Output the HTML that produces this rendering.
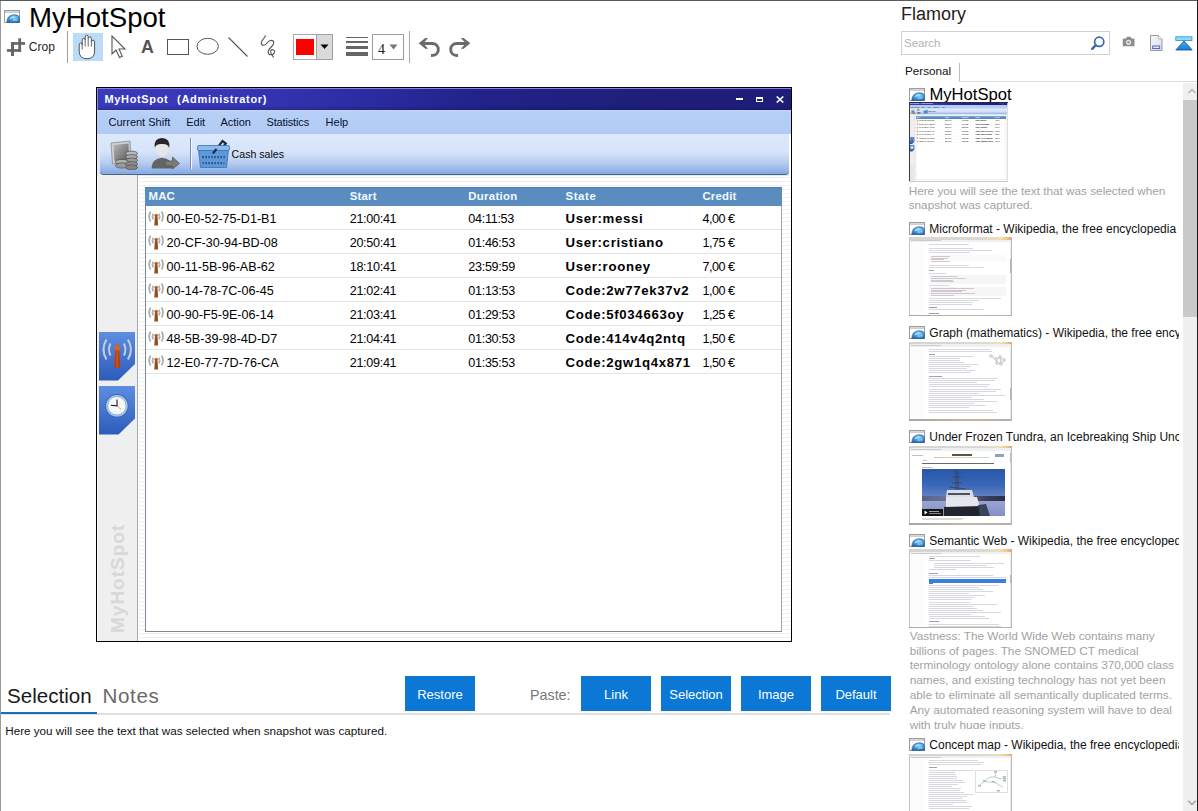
<!DOCTYPE html>
<html><head><meta charset="utf-8">
<style>
*{box-sizing:border-box}
html,body{margin:0;padding:0}
body{width:1198px;height:811px;overflow:hidden;position:relative;background:#fff;font-family:"Liberation Sans",sans-serif;color:#000}
.a{position:absolute}
.t{position:absolute;white-space:nowrap;line-height:1}
.btn{position:absolute;top:676px;width:70px;height:34.6px;background:#0a78d4;color:#fff;font-size:13px;line-height:34px;padding-top:2px;text-align:center}
</style></head><body>
<!-- window borders -->
<div class="a" style="left:0;top:0;width:1198px;height:1px;background:#5a5a5a"></div>
<div class="a" style="left:0;top:1px;width:1px;height:810px;background:#9a9a9a"></div>
<div class="a" style="left:1197px;top:0;width:1px;height:811px;background:#1a1a1a"></div>

<!-- app icon -->
<svg class="a" style="left:4px;top:10px" width="16" height="13"><use href="#ic"/></svg>
<div class="t" style="left:29px;top:4.4px;font-size:27.6px;color:#000">MyHotSpot</div>

<!-- toolbar -->
<svg class="a" style="left:6px;top:38px" width="20" height="19" viewBox="0 0 20 19">
<g fill="#666">
<rect x="5" y="4" width="3" height="14"/>
<rect x="12.3" y="0.3" width="2.8" height="13.5"/>
<rect x="5" y="4.1" width="14" height="2.7"/>
<rect x="0.9" y="11.1" width="14.2" height="2.7"/>
</g></svg>
<div class="t" style="left:28.8px;top:41.4px;font-size:12px;color:#222">Crop</div>
<div class="a" style="left:67px;top:31px;width:1px;height:32px;background:#a0a0a0"></div>
<div class="a" style="left:73px;top:32.5px;width:29.5px;height:28.5px;background:#bbdcf8"></div>
<svg class="a" style="left:78px;top:34px" width="18" height="26" viewBox="0 0 18 26">
<path d="M1.2 17 L1.2 11 Q1.2 9 2.7 9 Q4.2 9 4.2 11 L4.2 6 Q4.2 4.3 5.7 4.3 Q7.2 4.3 7.2 6 L7.2 3 Q7.2 1.2 8.7 1.2 Q10.2 1.2 10.2 3 L10.2 4.5 Q10.2 2.9 11.8 2.9 Q13.4 2.9 13.4 4.5 L13.4 8 Q13.4 6.2 15 6.2 Q16.6 6.2 16.6 8 L16.6 17 Q16.6 24.8 9 24.8 Q1.2 24.8 1.2 17 Z" fill="#fff" stroke="#555" stroke-width="1"/>
<path d="M4.2 11 L4.2 15.5 M7.2 6 L7.2 12.5 M10.2 4.5 L10.2 12.5 M13.4 8 L13.4 12.5" stroke="#555" stroke-width="0.9" fill="none"/>
</svg>
<svg class="a" style="left:111px;top:35px" width="16" height="24" viewBox="0 0 16 24">
<path d="M1 1 L1 19 L5 15 L8.5 22.5 L11.3 21.3 L8 14 L14 14 Z" fill="#fff" stroke="#555" stroke-width="1.1" stroke-linejoin="miter"/>
</svg>
<div class="t" style="left:141px;top:39.3px;font-size:17.8px;font-weight:700;color:#555">A</div>
<div class="a" style="left:167px;top:39px;width:22px;height:16px;border:1px solid #555"></div>
<svg class="a" style="left:196px;top:37px" width="24" height="19" viewBox="0 0 24 19">
<ellipse cx="11.7" cy="9.3" rx="10.7" ry="8" fill="none" stroke="#555" stroke-width="1"/>
</svg>
<svg class="a" style="left:227px;top:36px" width="22" height="22" viewBox="0 0 22 22">
<path d="M1.5 1.5 L20.5 20.5" stroke="#555" stroke-width="1.1"/>
</svg>
<svg class="a" style="left:252px;top:32px" width="30" height="30" viewBox="0 0 30 30"><path d="M13.5 3.3 C12.5 6.5 8.5 9 9.3 11.8 C10.2 14.2 13.2 13.6 15.2 11 C17.2 8.6 19.6 7.6 21.2 9 C22.6 10.4 21.4 12.8 19.2 15 C16.4 17.8 15 20 16.8 22 C18.6 23.6 22.5 22.4 22.6 19.6 C22.6 17.4 19.8 17 18.8 18.6 C18 20.2 19.4 22.6 21.6 25.4" fill="none" stroke="#555" stroke-width="1.1"/></svg>
<!-- color picker -->
<div class="a" style="left:293px;top:34px;width:40px;height:25.5px;border:1px solid #a8a8a8;background:#fff"></div>
<div class="a" style="left:296px;top:38.7px;width:18px;height:16.3px;background:#f00"></div>
<div class="a" style="left:316px;top:34px;width:17px;height:25.5px;border:1px solid #a0a0a0;background:#dadada"></div>
<svg class="a" style="left:320px;top:44px" width="9" height="6" viewBox="0 0 9 6"><path d="M0.5 0.5 L8.5 0.5 L4.5 5 Z" fill="#000"/></svg>
<!-- line width -->
<div class="a" style="left:346px;top:37px;width:22px;height:1px;background:#666"></div>
<div class="a" style="left:346px;top:41px;width:22px;height:2px;background:#666"></div>
<div class="a" style="left:346px;top:46px;width:22px;height:3px;background:#666"></div>
<div class="a" style="left:346px;top:52px;width:22px;height:4px;background:#666"></div>
<div class="a" style="left:372px;top:34px;width:31.5px;height:25.5px;border:1px solid #9a9a9a;background:#fff"></div>
<div class="t" style="left:378px;top:42.6px;font-size:14px;font-family:'Liberation Serif',serif;color:#222">4</div>
<svg class="a" style="left:389px;top:44px" width="9" height="6" viewBox="0 0 9 6"><path d="M0.5 0.5 L8.5 0.5 L4.5 5.5 Z" fill="#777"/></svg>
<div class="a" style="left:409px;top:31px;width:1px;height:32px;background:#a8a8a8"></div>
<!-- undo redo -->
<svg class="a" style="left:410px;top:30px" width="70" height="32" viewBox="0 0 70 32">
<g fill="#6b6b6b"><path d="M8.7 13.3 L15.3 8.1 L18.1 8.1 L14.3 12.3 L14.3 14.5 L18.1 18.7 L15.3 18.7 Z"/><path d="M60.3 13.3 L53.7 8.1 L50.9 8.1 L54.7 12.3 L54.7 14.5 L50.9 18.7 L53.7 18.7 Z"/></g>
<g fill="none" stroke="#6b6b6b" stroke-width="2.9"><path d="M12.5 13.45 L22 13.45 C26.5 13.45 28.3 16.5 28.3 19.45 C28.3 22.5 26.5 25.45 22 25.45 L21 25.45"/><path d="M56.5 13.45 L47 13.45 C42.5 13.45 40.7 16.5 40.7 19.45 C40.7 22.5 42.5 25.45 47 25.45 L48 25.45"/></g>
</svg>

<!-- EMBEDDED WINDOW -->
<div id="win" class="a" style="left:96px;top:87px;width:696px;height:555px;background:#fff;border:1px solid #000;overflow:hidden">
<!-- rel coords: page - (97,88) -->
<div class="a" style="left:0;top:0;width:694px;height:22px;background:linear-gradient(180deg,rgba(0,0,0,0) 0,rgba(0,0,0,0) 80%,rgba(10,10,60,0.25) 100%),linear-gradient(90deg,#3a3abc 0,#3636b6 20%,#2c2ca2 38%,#22228a 55%,#1f1f7c 75%,#1e1e78 100%)"></div><div class="a" style="left:0;top:0;width:694px;height:1px;background:#8484dc"></div><div class="a" style="left:0;top:0;width:1px;height:22px;background:#8a8ae0"></div>
<div class="t" style="left:7.5px;top:5.6px;font-size:11px;font-weight:700;color:#fff;letter-spacing:0.65px">MyHotSpot</div>
<div class="t" style="left:80px;top:5.6px;font-size:11px;font-weight:700;color:#fff;letter-spacing:0.72px">(Administrator)</div>
<div class="a" style="left:639px;top:10px;width:7px;height:2.2px;background:#fff"></div>
<div class="a" style="left:658.9px;top:8.5px;width:7px;height:5.6px;border:1px solid #fff;border-top-width:2px"></div>
<svg class="a" style="left:678.5px;top:7.7px" width="8" height="7" viewBox="0 0 8 7"><path d="M0.7 0.5 L7.3 6.5 M7.3 0.5 L0.7 6.5" stroke="#fff" stroke-width="1.6"/></svg>
<!-- menu bar -->
<div class="a" style="left:0;top:22px;width:694px;height:24px;background:linear-gradient(180deg,#c4d8fa 0,#b6cff6 2px,#b2cbf4 100%)"></div>
<div class="t" style="left:11.5px;top:29px;font-size:11px;color:#0a1030">Current Shift</div>
<div class="t" style="left:89.2px;top:29px;font-size:11px;color:#0a1030">Edit</div>
<div class="t" style="left:123.4px;top:29px;font-size:11px;color:#0a1030">Action</div>
<div class="t" style="left:169.5px;top:29px;font-size:11px;color:#0a1030;letter-spacing:-0.15px">Statistics</div>
<div class="t" style="left:228.6px;top:29px;font-size:11px;color:#0a1030">Help</div>
<!-- toolbar -->
<div class="a" style="left:0;top:46px;width:694px;height:42px;background:#dfe8f6"></div>
<div class="a" style="left:692px;top:46px;width:2px;height:42px;background:#fff"></div>
<div class="a" style="left:2.5px;top:46px;width:689px;height:40.5px;border-radius:4px;background:linear-gradient(180deg,#dce9fc 0,#d6e3f9 45%,#b6cdf0 72%,#84aae2 100%);border-bottom:1.5px solid #4a6088"></div>
<!-- icons -->
<svg class="a" style="left:13px;top:52px" width="30" height="30" viewBox="0 0 30 30">
<defs><linearGradient id="scr" x1="0" y1="0" x2="1" y2="1"><stop offset="0" stop-color="#b8b8b8"/><stop offset="1" stop-color="#5a5a5a"/></linearGradient></defs>
<path d="M1 3 L20 1 L21 22 L2.5 24 Z" fill="#d0d0d0" stroke="#8a8a8a" stroke-width="0.8"/>
<path d="M3.5 5 L18.5 3.5 L19 19.5 L4.5 21 Z" fill="url(#scr)"/>
<g stroke="#4a4a4a" stroke-width="0.7">
<ellipse cx="21.5" cy="13.5" rx="6" ry="2.4" fill="#b8b8b8"/>
<ellipse cx="21.5" cy="17" rx="6" ry="2.4" fill="#a8a8a8"/>
<ellipse cx="21.5" cy="20.5" rx="6" ry="2.4" fill="#9a9a9a"/>
<ellipse cx="12" cy="22" rx="6.5" ry="2.6" fill="#b0b0b0"/>
<ellipse cx="12" cy="25.5" rx="6.5" ry="2.6" fill="#9a9a9a"/>
<ellipse cx="21.5" cy="24" rx="6" ry="2.4" fill="#8e8e8e"/>
<ellipse cx="21.5" cy="27.3" rx="6" ry="2.4" fill="#858585"/>
</g></svg>
<svg class="a" style="left:54px;top:49px" width="30" height="33" viewBox="0 0 30 33">
<ellipse cx="11" cy="12.5" rx="6.3" ry="7.2" fill="#e6e6e6"/>
<path d="M3.8 11 Q2.5 1 11 1 Q19.5 1 18.2 11 Q17 6.5 11 7 Q5 6.5 3.8 11 Z" fill="#262626"/>
<path d="M0.5 31.5 Q1 21.5 11 20.8 Q21 21.5 21.5 31.5 Z" fill="#646464"/>
<path d="M14 24 L21.5 24 L21.5 20 L28.5 26.5 L21.5 32 L21.5 29 L14 29 Z" fill="#7a7a7a" stroke="#505050" stroke-width="0.7"/>
</svg>
<div class="a" style="left:92.7px;top:50px;width:1px;height:31px;background:#7a8ab0"></div>
<div class="a" style="left:93.7px;top:50px;width:1px;height:31px;background:#f4f8ff"></div>
<svg class="a" style="left:100px;top:50px" width="34" height="31" viewBox="0 0 34 31">
<path d="M16 15.5 L25.5 3 L28.8 5.5 L19.5 18" fill="none" stroke="#1c2c48" stroke-width="2.2"/>
<path d="M1.5 12 L31.5 12 L29.5 29.5 L3.5 29.5 Z" fill="#5e98d6" stroke="#3a70b0" stroke-width="0.8"/>
<rect x="0.5" y="7.5" width="32" height="5" rx="1.5" fill="#8cbcec" stroke="#3a70b0" stroke-width="0.8"/>
<path d="M16 15.5 L19.5 10.8" stroke="#1c2c48" stroke-width="2.2"/>
<g fill="#2a5a98"><rect x="5" y="18" width="23" height="2.2"/><rect x="5.5" y="24" width="22" height="2.2"/></g>
<g fill="#5e98d6"><rect x="7" y="17" width="1.3" height="10"/><rect x="10" y="17" width="1.3" height="10"/><rect x="13" y="17" width="1.3" height="10"/><rect x="16" y="17" width="1.3" height="10"/><rect x="19" y="17" width="1.3" height="10"/><rect x="22" y="17" width="1.3" height="10"/><rect x="25" y="17" width="1.3" height="10"/></g>
</svg>
<div class="t" style="left:134.6px;top:60.9px;font-size:10.6px;color:#0a0a0a">Cash sales</div>
<!-- content area -->
<div class="a" style="left:0;top:88px;width:694px;height:467px;background:repeating-linear-gradient(180deg,#fff 0,#fff 1px,#efefec 1px,#efefec 2px,#fff 2px,#fff 4px)"></div>
<div class="a" style="left:1px;top:87px;width:39px;height:468px;background:#efefef"></div>
<div class="a" style="left:40px;top:87px;width:1px;height:468px;background:#a4a8b0"></div>
<!-- sidebar buttons -->
<svg class="a" style="left:2px;top:243px" width="37" height="50" viewBox="0 0 37 50">
<defs><linearGradient id="sb" x1="0" y1="0" x2="0" y2="1"><stop offset="0" stop-color="#5e8ede"/><stop offset="1" stop-color="#2c5cbc"/></linearGradient></defs>
<path d="M0 1 L36 1 L36 33 L19 49.5 L0 49.5 Z" fill="url(#sb)"/>
<g fill="none" stroke="#cfd6e6" stroke-width="2" opacity="0.9">
<path d="M7.5 8.5 Q1.5 18.5 7.5 28.5"/><path d="M11.5 12.5 Q8.5 18.5 11.5 24.5"/><path d="M28.9 8.5 Q34.9 18.5 28.9 28.5"/><path d="M24.9 12.5 Q27.9 18.5 24.9 24.5"/></g>
<path d="M16.4 17 L20 17 L21.4 36.4 L15 36.4 Z" fill="#b8400e"/>
<path d="M17.4 17 L18.4 17 L18.8 36 L17.6 36 Z" fill="#e06a2a" opacity="0.7"/>
<circle cx="18.2" cy="16.8" r="2.8" fill="#e0601a"/>
</svg>
<svg class="a" style="left:2px;top:298px" width="37" height="50" viewBox="0 0 37 50">
<path d="M0 0 L36 0 L36 32.6 L19.5 48.6 L0 48.6 Z" fill="url(#sb)"/>
<circle cx="17.9" cy="19.8" r="11.7" fill="#3a66b8"/>
<circle cx="17.9" cy="19.8" r="10.8" fill="#a8ccec"/>
<circle cx="17.9" cy="19.8" r="9.2" fill="#f8f8f8" stroke="#7aa8d8" stroke-width="0.8"/>
<path d="M18 13.4 L18 19.8 L11.8 19.2" fill="none" stroke="#1a1a1a" stroke-width="1.1"/>
<path d="M18 19.8 L22 23.5" stroke="#d04040" stroke-width="0.5"/>
</svg>
<div class="t" style="left:11px;top:545px;font-size:19px;font-weight:700;color:#d8d8d8;letter-spacing:1px;transform-origin:0 0;transform:rotate(-90deg)">MyHotSpot</div>
<!-- table -->
<div class="a" style="left:48px;top:99px;width:637px;height:445px;background:#fff;border-left:1px solid #7a8898;border-right:1px solid #9aa4b0;border-bottom:1.5px solid #7a8898"></div>
<div class="a" style="left:48px;top:99px;width:637px;height:18.7px;background:#5b8cc0;border-top:1px solid #4e7cb0"></div>
<div class="t" style="left:51.5px;top:103.3px;font-size:11.4px;font-weight:700;color:#eefaff;letter-spacing:0.2px">MAC</div>
<div class="t" style="left:252.7px;top:103.3px;font-size:11.4px;font-weight:700;color:#eefaff;letter-spacing:0.2px">Start</div>
<div class="t" style="left:371.3px;top:103.3px;font-size:11.4px;font-weight:700;color:#eefaff;letter-spacing:0.3px">Duration</div>
<div class="t" style="left:468.5px;top:103.3px;font-size:11.4px;font-weight:700;color:#eefaff;letter-spacing:0.6px">State</div>
<div class="t" style="left:605.4px;top:103.3px;font-size:11.4px;font-weight:700;color:#eefaff;letter-spacing:0.2px">Credit</div>
<svg class="a" style="left:51px;top:122.0px" width="16" height="17" viewBox="0 0 16 17"><g fill="none" stroke="#b0b0b0" stroke-width="1.8"><path d="M2.6 1.5 Q-0.2 6.5 2.6 11.5"/><path d="M5.3 3.6 Q3.9 6.5 5.3 9.4"/><path d="M13.6 1.5 Q16.4 6.5 13.6 11.5"/><path d="M10.9 3.6 Q12.3 6.5 10.9 9.4"/></g><path d="M7 5 L9.4 5 L10.1 15.6 L6.3 15.6 Z" fill="#9a4a1e"/><circle cx="8.2" cy="5.3" r="1.6" fill="#c05a28"/></svg><div class="t" style="left:69.6px;top:124.9px;font-size:12.6px;letter-spacing:0px">00-E0-52-75-D1-B1</div><div class="t" style="left:252.7px;top:124.9px;font-size:12.6px;letter-spacing:-0.3px">21:00:41</div><div class="t" style="left:371.3px;top:124.9px;font-size:12.6px;letter-spacing:-0.3px">04:11:53</div><div class="t" style="left:468.5px;top:123.9px;font-size:13.2px;font-weight:700;letter-spacing:0.68px">User:messi</div><div class="t" style="left:605.4px;top:124.9px;font-size:12.6px;letter-spacing:-0.5px">4,00 €</div><div class="a" style="left:49px;top:140.7px;width:635px;height:1.3px;background:#e2e4e8"></div><svg class="a" style="left:51px;top:146.0px" width="16" height="17" viewBox="0 0 16 17"><g fill="none" stroke="#b0b0b0" stroke-width="1.8"><path d="M2.6 1.5 Q-0.2 6.5 2.6 11.5"/><path d="M5.3 3.6 Q3.9 6.5 5.3 9.4"/><path d="M13.6 1.5 Q16.4 6.5 13.6 11.5"/><path d="M10.9 3.6 Q12.3 6.5 10.9 9.4"/></g><path d="M7 5 L9.4 5 L10.1 15.6 L6.3 15.6 Z" fill="#9a4a1e"/><circle cx="8.2" cy="5.3" r="1.6" fill="#c05a28"/></svg><div class="t" style="left:69.6px;top:148.9px;font-size:12.6px;letter-spacing:0px">20-CF-30-94-BD-08</div><div class="t" style="left:252.7px;top:148.9px;font-size:12.6px;letter-spacing:-0.3px">20:50:41</div><div class="t" style="left:371.3px;top:148.9px;font-size:12.6px;letter-spacing:-0.3px">01:46:53</div><div class="t" style="left:468.5px;top:147.9px;font-size:13.2px;font-weight:700;letter-spacing:0.68px">User:cristiano</div><div class="t" style="left:605.4px;top:148.9px;font-size:12.6px;letter-spacing:-0.5px">1,75 €</div><div class="a" style="left:49px;top:164.7px;width:635px;height:1.3px;background:#e2e4e8"></div><svg class="a" style="left:51px;top:170.0px" width="16" height="17" viewBox="0 0 16 17"><g fill="none" stroke="#b0b0b0" stroke-width="1.8"><path d="M2.6 1.5 Q-0.2 6.5 2.6 11.5"/><path d="M5.3 3.6 Q3.9 6.5 5.3 9.4"/><path d="M13.6 1.5 Q16.4 6.5 13.6 11.5"/><path d="M10.9 3.6 Q12.3 6.5 10.9 9.4"/></g><path d="M7 5 L9.4 5 L10.1 15.6 L6.3 15.6 Z" fill="#9a4a1e"/><circle cx="8.2" cy="5.3" r="1.6" fill="#c05a28"/></svg><div class="t" style="left:69.6px;top:172.9px;font-size:12.6px;letter-spacing:0px">00-11-5B-96-AB-62</div><div class="t" style="left:252.7px;top:172.9px;font-size:12.6px;letter-spacing:-0.3px">18:10:41</div><div class="t" style="left:371.3px;top:172.9px;font-size:12.6px;letter-spacing:-0.3px">23:59:59</div><div class="t" style="left:468.5px;top:171.9px;font-size:13.2px;font-weight:700;letter-spacing:0.68px">User:rooney</div><div class="t" style="left:605.4px;top:172.9px;font-size:12.6px;letter-spacing:-0.5px">7,00 €</div><div class="a" style="left:49px;top:188.7px;width:635px;height:1.3px;background:#e2e4e8"></div><svg class="a" style="left:51px;top:194.0px" width="16" height="17" viewBox="0 0 16 17"><g fill="none" stroke="#b0b0b0" stroke-width="1.8"><path d="M2.6 1.5 Q-0.2 6.5 2.6 11.5"/><path d="M5.3 3.6 Q3.9 6.5 5.3 9.4"/><path d="M13.6 1.5 Q16.4 6.5 13.6 11.5"/><path d="M10.9 3.6 Q12.3 6.5 10.9 9.4"/></g><path d="M7 5 L9.4 5 L10.1 15.6 L6.3 15.6 Z" fill="#9a4a1e"/><circle cx="8.2" cy="5.3" r="1.6" fill="#c05a28"/></svg><div class="t" style="left:69.6px;top:196.9px;font-size:12.6px;letter-spacing:0px">00-14-78-7C-06-45</div><div class="t" style="left:252.7px;top:196.9px;font-size:12.6px;letter-spacing:-0.3px">21:02:41</div><div class="t" style="left:371.3px;top:196.9px;font-size:12.6px;letter-spacing:-0.3px">01:13:53</div><div class="t" style="left:468.5px;top:195.9px;font-size:13.2px;font-weight:700;letter-spacing:0.68px">Code:2w77ek37v2</div><div class="t" style="left:605.4px;top:196.9px;font-size:12.6px;letter-spacing:-0.5px">1,00 €</div><div class="a" style="left:49px;top:212.7px;width:635px;height:1.3px;background:#e2e4e8"></div><svg class="a" style="left:51px;top:218.0px" width="16" height="17" viewBox="0 0 16 17"><g fill="none" stroke="#b0b0b0" stroke-width="1.8"><path d="M2.6 1.5 Q-0.2 6.5 2.6 11.5"/><path d="M5.3 3.6 Q3.9 6.5 5.3 9.4"/><path d="M13.6 1.5 Q16.4 6.5 13.6 11.5"/><path d="M10.9 3.6 Q12.3 6.5 10.9 9.4"/></g><path d="M7 5 L9.4 5 L10.1 15.6 L6.3 15.6 Z" fill="#9a4a1e"/><circle cx="8.2" cy="5.3" r="1.6" fill="#c05a28"/></svg><div class="t" style="left:69.6px;top:220.9px;font-size:12.6px;letter-spacing:0px">00-90-F5-9E-06-14</div><div class="t" style="left:252.7px;top:220.9px;font-size:12.6px;letter-spacing:-0.3px">21:03:41</div><div class="t" style="left:371.3px;top:220.9px;font-size:12.6px;letter-spacing:-0.3px">01:29:53</div><div class="t" style="left:468.5px;top:219.9px;font-size:13.2px;font-weight:700;letter-spacing:0.68px">Code:5f034663oy</div><div class="t" style="left:605.4px;top:220.9px;font-size:12.6px;letter-spacing:-0.5px">1,25 €</div><div class="a" style="left:49px;top:236.7px;width:635px;height:1.3px;background:#e2e4e8"></div><svg class="a" style="left:51px;top:242.0px" width="16" height="17" viewBox="0 0 16 17"><g fill="none" stroke="#b0b0b0" stroke-width="1.8"><path d="M2.6 1.5 Q-0.2 6.5 2.6 11.5"/><path d="M5.3 3.6 Q3.9 6.5 5.3 9.4"/><path d="M13.6 1.5 Q16.4 6.5 13.6 11.5"/><path d="M10.9 3.6 Q12.3 6.5 10.9 9.4"/></g><path d="M7 5 L9.4 5 L10.1 15.6 L6.3 15.6 Z" fill="#9a4a1e"/><circle cx="8.2" cy="5.3" r="1.6" fill="#c05a28"/></svg><div class="t" style="left:69.6px;top:244.9px;font-size:12.6px;letter-spacing:0px">48-5B-39-98-4D-D7</div><div class="t" style="left:252.7px;top:244.9px;font-size:12.6px;letter-spacing:-0.3px">21:04:41</div><div class="t" style="left:371.3px;top:244.9px;font-size:12.6px;letter-spacing:-0.3px">01:30:53</div><div class="t" style="left:468.5px;top:243.9px;font-size:13.2px;font-weight:700;letter-spacing:0.68px">Code:414v4q2ntq</div><div class="t" style="left:605.4px;top:244.9px;font-size:12.6px;letter-spacing:-0.5px">1,50 €</div><div class="a" style="left:49px;top:260.7px;width:635px;height:1.3px;background:#e2e4e8"></div><svg class="a" style="left:51px;top:266.0px" width="16" height="17" viewBox="0 0 16 17"><g fill="none" stroke="#b0b0b0" stroke-width="1.8"><path d="M2.6 1.5 Q-0.2 6.5 2.6 11.5"/><path d="M5.3 3.6 Q3.9 6.5 5.3 9.4"/><path d="M13.6 1.5 Q16.4 6.5 13.6 11.5"/><path d="M10.9 3.6 Q12.3 6.5 10.9 9.4"/></g><path d="M7 5 L9.4 5 L10.1 15.6 L6.3 15.6 Z" fill="#9a4a1e"/><circle cx="8.2" cy="5.3" r="1.6" fill="#c05a28"/></svg><div class="t" style="left:69.6px;top:268.9px;font-size:12.6px;letter-spacing:0px">12-E0-77-7D-76-CA</div><div class="t" style="left:252.7px;top:268.9px;font-size:12.6px;letter-spacing:-0.3px">21:09:41</div><div class="t" style="left:371.3px;top:268.9px;font-size:12.6px;letter-spacing:-0.3px">01:35:53</div><div class="t" style="left:468.5px;top:267.9px;font-size:13.2px;font-weight:700;letter-spacing:0.68px">Code:2gw1q4x871</div><div class="t" style="left:605.4px;top:268.9px;font-size:12.6px;letter-spacing:-0.5px">1,50 €</div><div class="a" style="left:49px;top:284.7px;width:635px;height:1.3px;background:#e2e4e8"></div>
</div>

<!-- bottom tabs -->
<div class="t" style="left:7px;top:685.6px;font-size:20.6px;color:#1a1a1a">Selection</div>
<div class="t" style="left:102.6px;top:685.6px;font-size:20.6px;color:#6a6a6a;letter-spacing:0.6px">Notes</div>
<div class="a" style="left:1px;top:713px;width:889px;height:2px;background:#e0e0e0"></div>
<div class="a" style="left:1px;top:712px;width:96px;height:2px;background:#1a70b8"></div>
<div class="t" style="left:5.2px;top:724.6px;font-size:11.7px;color:#111">Here you will see the text that was selected when snapshot was captured.</div>
<div class="btn" style="left:405px">Restore</div>
<div class="t" style="left:530px;top:687.5px;font-size:14.3px;color:#777">Paste:</div>
<div class="btn" style="left:581px">Link</div>
<div class="btn" style="left:661px">Selection</div>
<div class="btn" style="left:741px">Image</div>
<div class="btn" style="left:821px">Default</div>

<!-- RIGHT PANEL -->
<div class="t" style="left:901px;top:5px;font-size:18px;color:#222">Flamory</div>
<div class="a" style="left:901px;top:31px;width:209px;height:24px;border:1px solid #d0d0d0;background:#fff"></div>
<div class="t" style="left:904px;top:37.8px;font-size:11.5px;color:#b4b4b4">Search</div>
<svg class="a" style="left:1090px;top:35px" width="17" height="16" viewBox="0 0 17 16">
<circle cx="9.2" cy="6.8" r="4.6" fill="none" stroke="#3a6aaa" stroke-width="1.7"/>
<path d="M5.8 10.2 L2.2 13.8" stroke="#3a6aaa" stroke-width="2.4" stroke-linecap="round"/>
</svg>
<svg class="a" style="left:1122px;top:36px" width="13" height="11" viewBox="0 0 13 11">
<path d="M1.5 2.5 L4 2.5 L5 0.8 L8.5 0.8 L9.5 2.5 L11.5 2.5 Q12.5 2.5 12.5 3.5 L12.5 9.5 Q12.5 10.3 11.5 10.3 L1.5 10.3 Q0.8 10.3 0.8 9.5 L0.8 3.5 Q0.8 2.5 1.5 2.5 Z" fill="#8c8c8c"/>
<circle cx="6.6" cy="6.3" r="2.6" fill="#e8e8e8"/><circle cx="6.6" cy="6.3" r="1.3" fill="#9a9a9a"/>
</svg>
<svg class="a" style="left:1150px;top:35px" width="13" height="17" viewBox="0 0 13 17">
<defs><linearGradient id="dg" x1="0" y1="0" x2="1" y2="1"><stop offset="0" stop-color="#f4f6fa"/><stop offset="1" stop-color="#d8e0ec"/></linearGradient></defs>
<path d="M0.5 0.5 L8.5 0.5 L12 4 L12 15.5 L0.5 15.5 Z" fill="url(#dg)" stroke="#8a8e98" stroke-width="0.9"/>
<path d="M8.5 0.5 L8.5 4 L12 4" fill="#fff" stroke="#a0a4ac" stroke-width="0.7"/>
<rect x="2.7" y="11" width="7" height="2.6" fill="#dfe4f8" stroke="#4a58b8" stroke-width="0.9"/>
</svg>
<svg class="a" style="left:1175px;top:36px" width="18" height="15" viewBox="0 0 18 15">
<defs><linearGradient id="tg" x1="0" y1="0" x2="0" y2="1"><stop offset="0" stop-color="#40b8f4"/><stop offset="1" stop-color="#1a78d0"/></linearGradient></defs>
<rect x="0.8" y="0.8" width="16.2" height="3.6" fill="#88ddfa" stroke="#2a8ad8" stroke-width="0.8"/>
<path d="M9 5 L17.2 14 L0.8 14 Z" fill="url(#tg)" stroke="#0e4a98" stroke-width="0.8"/>
</svg>
<div class="t" style="left:905px;top:65.4px;font-size:11.7px;color:#111">Personal</div>
<div class="a" style="left:959px;top:63px;width:1px;height:19px;background:#bdbdbd"></div>
<div class="a" style="left:959px;top:80.5px;width:238px;height:1.5px;background:#dcdcdc"></div>
<!-- scrollbar -->
<div class="a" style="left:1183px;top:83px;width:14px;height:728px;background:#f0f0f0"></div>
<div class="a" style="left:1183px;top:100px;width:14px;height:217px;background:#c9c9c9"></div>
<svg class="a" style="left:1186.5px;top:87px" width="10" height="8" viewBox="0 0 10 8"><path d="M1.5 6 L5 2.5 L8.5 6" fill="none" stroke="#a8a8a8" stroke-width="1.1"/></svg>
<svg class="a" style="left:1187px;top:798.5px" width="10" height="8" viewBox="0 0 10 8"><path d="M1.2 1.8 L5 5.6 L8.8 1.8" fill="none" stroke="#9a9a9a" stroke-width="1.3"/></svg>

<div id="list"><svg width="0" height="0" style="position:absolute"><defs><radialGradient id="gl" cx="0.55" cy="0.35" r="0.8"><stop offset="0" stop-color="#a8e0fc"/><stop offset="0.45" stop-color="#4aa0e0"/><stop offset="1" stop-color="#1a5aa8"/></radialGradient><symbol id="ic" viewBox="0 0 16 13"><rect x="0.5" y="0.5" width="15" height="12" fill="#fff" stroke="#9c9c9c"/><rect x="1" y="1" width="14" height="1.8" fill="#c4c4c4"/><rect x="1.5" y="1.3" width="13" height="0.6" fill="#e4e4e4"/><path d="M2.8 12.4 Q3 5.2 10 4.8 Q14.6 4.6 15.4 7.2 L15.4 12.4 Z" fill="url(#gl)" stroke="#2a5c98" stroke-width="0.7"/><path d="M6 9 Q7.5 7 10 6.8 M9 10.5 Q11 9.5 13.5 10" stroke="#b8ecff" stroke-width="0.9" fill="none" opacity="0.85"/></symbol></defs></svg><svg class="a" style="left:909px;top:88px" width="16" height="13"><use href="#ic"/></svg><div class="t" style="left:929.5px;top:86.5px;font-size:16.6px;color:#000">MyHotSpot</div><div class="a" style="left:909.2px;top:102.4px;width:98.5px;height:79.3px;overflow:hidden"><div class="a" style="left:0;top:0;transform-origin:0 0;transform:scale(0.1415,0.1428)"><div class="a" style="left:0;top:0;width:696px;height:555px;background:#fff;border:1px solid #000;overflow:hidden">
<!-- rel coords: page - (97,88) -->
<div class="a" style="left:0;top:0;width:694px;height:22px;background:linear-gradient(180deg,rgba(0,0,0,0) 0,rgba(0,0,0,0) 80%,rgba(10,10,60,0.25) 100%),linear-gradient(90deg,#3a3abc 0,#3636b6 20%,#2c2ca2 38%,#22228a 55%,#1f1f7c 75%,#1e1e78 100%)"></div><div class="a" style="left:0;top:0;width:694px;height:1px;background:#8484dc"></div><div class="a" style="left:0;top:0;width:1px;height:22px;background:#8a8ae0"></div>
<div class="t" style="left:7.5px;top:5.6px;font-size:11px;font-weight:700;color:#fff;letter-spacing:0.65px">MyHotSpot</div>
<div class="t" style="left:80px;top:5.6px;font-size:11px;font-weight:700;color:#fff;letter-spacing:0.72px">(Administrator)</div>
<div class="a" style="left:639px;top:10px;width:7px;height:2.2px;background:#fff"></div>
<div class="a" style="left:658.9px;top:8.5px;width:7px;height:5.6px;border:1px solid #fff;border-top-width:2px"></div>
<svg class="a" style="left:678.5px;top:7.7px" width="8" height="7" viewBox="0 0 8 7"><path d="M0.7 0.5 L7.3 6.5 M7.3 0.5 L0.7 6.5" stroke="#fff" stroke-width="1.6"/></svg>
<!-- menu bar -->
<div class="a" style="left:0;top:22px;width:694px;height:24px;background:linear-gradient(180deg,#c4d8fa 0,#b6cff6 2px,#b2cbf4 100%)"></div>
<div class="t" style="left:11.5px;top:29px;font-size:11px;color:#0a1030">Current Shift</div>
<div class="t" style="left:89.2px;top:29px;font-size:11px;color:#0a1030">Edit</div>
<div class="t" style="left:123.4px;top:29px;font-size:11px;color:#0a1030">Action</div>
<div class="t" style="left:169.5px;top:29px;font-size:11px;color:#0a1030;letter-spacing:-0.15px">Statistics</div>
<div class="t" style="left:228.6px;top:29px;font-size:11px;color:#0a1030">Help</div>
<!-- toolbar -->
<div class="a" style="left:0;top:46px;width:694px;height:42px;background:#dfe8f6"></div>
<div class="a" style="left:692px;top:46px;width:2px;height:42px;background:#fff"></div>
<div class="a" style="left:2.5px;top:46px;width:689px;height:40.5px;border-radius:4px;background:linear-gradient(180deg,#dce9fc 0,#d6e3f9 45%,#b6cdf0 72%,#84aae2 100%);border-bottom:1.5px solid #4a6088"></div>
<!-- icons -->
<svg class="a" style="left:13px;top:52px" width="30" height="30" viewBox="0 0 30 30">
<defs><linearGradient id="scr" x1="0" y1="0" x2="1" y2="1"><stop offset="0" stop-color="#b8b8b8"/><stop offset="1" stop-color="#5a5a5a"/></linearGradient></defs>
<path d="M1 3 L20 1 L21 22 L2.5 24 Z" fill="#d0d0d0" stroke="#8a8a8a" stroke-width="0.8"/>
<path d="M3.5 5 L18.5 3.5 L19 19.5 L4.5 21 Z" fill="url(#scr)"/>
<g stroke="#4a4a4a" stroke-width="0.7">
<ellipse cx="21.5" cy="13.5" rx="6" ry="2.4" fill="#b8b8b8"/>
<ellipse cx="21.5" cy="17" rx="6" ry="2.4" fill="#a8a8a8"/>
<ellipse cx="21.5" cy="20.5" rx="6" ry="2.4" fill="#9a9a9a"/>
<ellipse cx="12" cy="22" rx="6.5" ry="2.6" fill="#b0b0b0"/>
<ellipse cx="12" cy="25.5" rx="6.5" ry="2.6" fill="#9a9a9a"/>
<ellipse cx="21.5" cy="24" rx="6" ry="2.4" fill="#8e8e8e"/>
<ellipse cx="21.5" cy="27.3" rx="6" ry="2.4" fill="#858585"/>
</g></svg>
<svg class="a" style="left:54px;top:49px" width="30" height="33" viewBox="0 0 30 33">
<ellipse cx="11" cy="12.5" rx="6.3" ry="7.2" fill="#e6e6e6"/>
<path d="M3.8 11 Q2.5 1 11 1 Q19.5 1 18.2 11 Q17 6.5 11 7 Q5 6.5 3.8 11 Z" fill="#262626"/>
<path d="M0.5 31.5 Q1 21.5 11 20.8 Q21 21.5 21.5 31.5 Z" fill="#646464"/>
<path d="M14 24 L21.5 24 L21.5 20 L28.5 26.5 L21.5 32 L21.5 29 L14 29 Z" fill="#7a7a7a" stroke="#505050" stroke-width="0.7"/>
</svg>
<div class="a" style="left:92.7px;top:50px;width:1px;height:31px;background:#7a8ab0"></div>
<div class="a" style="left:93.7px;top:50px;width:1px;height:31px;background:#f4f8ff"></div>
<svg class="a" style="left:100px;top:50px" width="34" height="31" viewBox="0 0 34 31">
<path d="M16 15.5 L25.5 3 L28.8 5.5 L19.5 18" fill="none" stroke="#1c2c48" stroke-width="2.2"/>
<path d="M1.5 12 L31.5 12 L29.5 29.5 L3.5 29.5 Z" fill="#5e98d6" stroke="#3a70b0" stroke-width="0.8"/>
<rect x="0.5" y="7.5" width="32" height="5" rx="1.5" fill="#8cbcec" stroke="#3a70b0" stroke-width="0.8"/>
<path d="M16 15.5 L19.5 10.8" stroke="#1c2c48" stroke-width="2.2"/>
<g fill="#2a5a98"><rect x="5" y="18" width="23" height="2.2"/><rect x="5.5" y="24" width="22" height="2.2"/></g>
<g fill="#5e98d6"><rect x="7" y="17" width="1.3" height="10"/><rect x="10" y="17" width="1.3" height="10"/><rect x="13" y="17" width="1.3" height="10"/><rect x="16" y="17" width="1.3" height="10"/><rect x="19" y="17" width="1.3" height="10"/><rect x="22" y="17" width="1.3" height="10"/><rect x="25" y="17" width="1.3" height="10"/></g>
</svg>
<div class="t" style="left:134.6px;top:60.9px;font-size:10.6px;color:#0a0a0a">Cash sales</div>
<!-- content area -->
<div class="a" style="left:0;top:88px;width:694px;height:467px;background:repeating-linear-gradient(180deg,#fff 0,#fff 1px,#efefec 1px,#efefec 2px,#fff 2px,#fff 4px)"></div>
<div class="a" style="left:1px;top:87px;width:39px;height:468px;background:#efefef"></div>
<div class="a" style="left:40px;top:87px;width:1px;height:468px;background:#a4a8b0"></div>
<!-- sidebar buttons -->
<svg class="a" style="left:2px;top:243px" width="37" height="50" viewBox="0 0 37 50">
<defs><linearGradient id="sb" x1="0" y1="0" x2="0" y2="1"><stop offset="0" stop-color="#5e8ede"/><stop offset="1" stop-color="#2c5cbc"/></linearGradient></defs>
<path d="M0 1 L36 1 L36 33 L19 49.5 L0 49.5 Z" fill="url(#sb)"/>
<g fill="none" stroke="#cfd6e6" stroke-width="2" opacity="0.9">
<path d="M7.5 8.5 Q1.5 18.5 7.5 28.5"/><path d="M11.5 12.5 Q8.5 18.5 11.5 24.5"/><path d="M28.9 8.5 Q34.9 18.5 28.9 28.5"/><path d="M24.9 12.5 Q27.9 18.5 24.9 24.5"/></g>
<path d="M16.4 17 L20 17 L21.4 36.4 L15 36.4 Z" fill="#b8400e"/>
<path d="M17.4 17 L18.4 17 L18.8 36 L17.6 36 Z" fill="#e06a2a" opacity="0.7"/>
<circle cx="18.2" cy="16.8" r="2.8" fill="#e0601a"/>
</svg>
<svg class="a" style="left:2px;top:298px" width="37" height="50" viewBox="0 0 37 50">
<path d="M0 0 L36 0 L36 32.6 L19.5 48.6 L0 48.6 Z" fill="url(#sb)"/>
<circle cx="17.9" cy="19.8" r="11.7" fill="#3a66b8"/>
<circle cx="17.9" cy="19.8" r="10.8" fill="#a8ccec"/>
<circle cx="17.9" cy="19.8" r="9.2" fill="#f8f8f8" stroke="#7aa8d8" stroke-width="0.8"/>
<path d="M18 13.4 L18 19.8 L11.8 19.2" fill="none" stroke="#1a1a1a" stroke-width="1.1"/>
<path d="M18 19.8 L22 23.5" stroke="#d04040" stroke-width="0.5"/>
</svg>
<div class="t" style="left:11px;top:545px;font-size:19px;font-weight:700;color:#d8d8d8;letter-spacing:1px;transform-origin:0 0;transform:rotate(-90deg)">MyHotSpot</div>
<!-- table -->
<div class="a" style="left:48px;top:99px;width:637px;height:445px;background:#fff;border-left:1px solid #7a8898;border-right:1px solid #9aa4b0;border-bottom:1.5px solid #7a8898"></div>
<div class="a" style="left:48px;top:99px;width:637px;height:18.7px;background:#5b8cc0;border-top:1px solid #4e7cb0"></div>
<div class="t" style="left:51.5px;top:103.3px;font-size:11.4px;font-weight:700;color:#eefaff;letter-spacing:0.2px">MAC</div>
<div class="t" style="left:252.7px;top:103.3px;font-size:11.4px;font-weight:700;color:#eefaff;letter-spacing:0.2px">Start</div>
<div class="t" style="left:371.3px;top:103.3px;font-size:11.4px;font-weight:700;color:#eefaff;letter-spacing:0.3px">Duration</div>
<div class="t" style="left:468.5px;top:103.3px;font-size:11.4px;font-weight:700;color:#eefaff;letter-spacing:0.6px">State</div>
<div class="t" style="left:605.4px;top:103.3px;font-size:11.4px;font-weight:700;color:#eefaff;letter-spacing:0.2px">Credit</div>
<svg class="a" style="left:51px;top:122.0px" width="16" height="17" viewBox="0 0 16 17"><g fill="none" stroke="#b0b0b0" stroke-width="1.8"><path d="M2.6 1.5 Q-0.2 6.5 2.6 11.5"/><path d="M5.3 3.6 Q3.9 6.5 5.3 9.4"/><path d="M13.6 1.5 Q16.4 6.5 13.6 11.5"/><path d="M10.9 3.6 Q12.3 6.5 10.9 9.4"/></g><path d="M7 5 L9.4 5 L10.1 15.6 L6.3 15.6 Z" fill="#9a4a1e"/><circle cx="8.2" cy="5.3" r="1.6" fill="#c05a28"/></svg><div class="t" style="left:69.6px;top:124.9px;font-size:12.6px;letter-spacing:0px">00-E0-52-75-D1-B1</div><div class="t" style="left:252.7px;top:124.9px;font-size:12.6px;letter-spacing:-0.3px">21:00:41</div><div class="t" style="left:371.3px;top:124.9px;font-size:12.6px;letter-spacing:-0.3px">04:11:53</div><div class="t" style="left:468.5px;top:123.9px;font-size:13.2px;font-weight:700;letter-spacing:0.68px">User:messi</div><div class="t" style="left:605.4px;top:124.9px;font-size:12.6px;letter-spacing:-0.5px">4,00 €</div><div class="a" style="left:49px;top:140.7px;width:635px;height:1.3px;background:#e2e4e8"></div><svg class="a" style="left:51px;top:146.0px" width="16" height="17" viewBox="0 0 16 17"><g fill="none" stroke="#b0b0b0" stroke-width="1.8"><path d="M2.6 1.5 Q-0.2 6.5 2.6 11.5"/><path d="M5.3 3.6 Q3.9 6.5 5.3 9.4"/><path d="M13.6 1.5 Q16.4 6.5 13.6 11.5"/><path d="M10.9 3.6 Q12.3 6.5 10.9 9.4"/></g><path d="M7 5 L9.4 5 L10.1 15.6 L6.3 15.6 Z" fill="#9a4a1e"/><circle cx="8.2" cy="5.3" r="1.6" fill="#c05a28"/></svg><div class="t" style="left:69.6px;top:148.9px;font-size:12.6px;letter-spacing:0px">20-CF-30-94-BD-08</div><div class="t" style="left:252.7px;top:148.9px;font-size:12.6px;letter-spacing:-0.3px">20:50:41</div><div class="t" style="left:371.3px;top:148.9px;font-size:12.6px;letter-spacing:-0.3px">01:46:53</div><div class="t" style="left:468.5px;top:147.9px;font-size:13.2px;font-weight:700;letter-spacing:0.68px">User:cristiano</div><div class="t" style="left:605.4px;top:148.9px;font-size:12.6px;letter-spacing:-0.5px">1,75 €</div><div class="a" style="left:49px;top:164.7px;width:635px;height:1.3px;background:#e2e4e8"></div><svg class="a" style="left:51px;top:170.0px" width="16" height="17" viewBox="0 0 16 17"><g fill="none" stroke="#b0b0b0" stroke-width="1.8"><path d="M2.6 1.5 Q-0.2 6.5 2.6 11.5"/><path d="M5.3 3.6 Q3.9 6.5 5.3 9.4"/><path d="M13.6 1.5 Q16.4 6.5 13.6 11.5"/><path d="M10.9 3.6 Q12.3 6.5 10.9 9.4"/></g><path d="M7 5 L9.4 5 L10.1 15.6 L6.3 15.6 Z" fill="#9a4a1e"/><circle cx="8.2" cy="5.3" r="1.6" fill="#c05a28"/></svg><div class="t" style="left:69.6px;top:172.9px;font-size:12.6px;letter-spacing:0px">00-11-5B-96-AB-62</div><div class="t" style="left:252.7px;top:172.9px;font-size:12.6px;letter-spacing:-0.3px">18:10:41</div><div class="t" style="left:371.3px;top:172.9px;font-size:12.6px;letter-spacing:-0.3px">23:59:59</div><div class="t" style="left:468.5px;top:171.9px;font-size:13.2px;font-weight:700;letter-spacing:0.68px">User:rooney</div><div class="t" style="left:605.4px;top:172.9px;font-size:12.6px;letter-spacing:-0.5px">7,00 €</div><div class="a" style="left:49px;top:188.7px;width:635px;height:1.3px;background:#e2e4e8"></div><svg class="a" style="left:51px;top:194.0px" width="16" height="17" viewBox="0 0 16 17"><g fill="none" stroke="#b0b0b0" stroke-width="1.8"><path d="M2.6 1.5 Q-0.2 6.5 2.6 11.5"/><path d="M5.3 3.6 Q3.9 6.5 5.3 9.4"/><path d="M13.6 1.5 Q16.4 6.5 13.6 11.5"/><path d="M10.9 3.6 Q12.3 6.5 10.9 9.4"/></g><path d="M7 5 L9.4 5 L10.1 15.6 L6.3 15.6 Z" fill="#9a4a1e"/><circle cx="8.2" cy="5.3" r="1.6" fill="#c05a28"/></svg><div class="t" style="left:69.6px;top:196.9px;font-size:12.6px;letter-spacing:0px">00-14-78-7C-06-45</div><div class="t" style="left:252.7px;top:196.9px;font-size:12.6px;letter-spacing:-0.3px">21:02:41</div><div class="t" style="left:371.3px;top:196.9px;font-size:12.6px;letter-spacing:-0.3px">01:13:53</div><div class="t" style="left:468.5px;top:195.9px;font-size:13.2px;font-weight:700;letter-spacing:0.68px">Code:2w77ek37v2</div><div class="t" style="left:605.4px;top:196.9px;font-size:12.6px;letter-spacing:-0.5px">1,00 €</div><div class="a" style="left:49px;top:212.7px;width:635px;height:1.3px;background:#e2e4e8"></div><svg class="a" style="left:51px;top:218.0px" width="16" height="17" viewBox="0 0 16 17"><g fill="none" stroke="#b0b0b0" stroke-width="1.8"><path d="M2.6 1.5 Q-0.2 6.5 2.6 11.5"/><path d="M5.3 3.6 Q3.9 6.5 5.3 9.4"/><path d="M13.6 1.5 Q16.4 6.5 13.6 11.5"/><path d="M10.9 3.6 Q12.3 6.5 10.9 9.4"/></g><path d="M7 5 L9.4 5 L10.1 15.6 L6.3 15.6 Z" fill="#9a4a1e"/><circle cx="8.2" cy="5.3" r="1.6" fill="#c05a28"/></svg><div class="t" style="left:69.6px;top:220.9px;font-size:12.6px;letter-spacing:0px">00-90-F5-9E-06-14</div><div class="t" style="left:252.7px;top:220.9px;font-size:12.6px;letter-spacing:-0.3px">21:03:41</div><div class="t" style="left:371.3px;top:220.9px;font-size:12.6px;letter-spacing:-0.3px">01:29:53</div><div class="t" style="left:468.5px;top:219.9px;font-size:13.2px;font-weight:700;letter-spacing:0.68px">Code:5f034663oy</div><div class="t" style="left:605.4px;top:220.9px;font-size:12.6px;letter-spacing:-0.5px">1,25 €</div><div class="a" style="left:49px;top:236.7px;width:635px;height:1.3px;background:#e2e4e8"></div><svg class="a" style="left:51px;top:242.0px" width="16" height="17" viewBox="0 0 16 17"><g fill="none" stroke="#b0b0b0" stroke-width="1.8"><path d="M2.6 1.5 Q-0.2 6.5 2.6 11.5"/><path d="M5.3 3.6 Q3.9 6.5 5.3 9.4"/><path d="M13.6 1.5 Q16.4 6.5 13.6 11.5"/><path d="M10.9 3.6 Q12.3 6.5 10.9 9.4"/></g><path d="M7 5 L9.4 5 L10.1 15.6 L6.3 15.6 Z" fill="#9a4a1e"/><circle cx="8.2" cy="5.3" r="1.6" fill="#c05a28"/></svg><div class="t" style="left:69.6px;top:244.9px;font-size:12.6px;letter-spacing:0px">48-5B-39-98-4D-D7</div><div class="t" style="left:252.7px;top:244.9px;font-size:12.6px;letter-spacing:-0.3px">21:04:41</div><div class="t" style="left:371.3px;top:244.9px;font-size:12.6px;letter-spacing:-0.3px">01:30:53</div><div class="t" style="left:468.5px;top:243.9px;font-size:13.2px;font-weight:700;letter-spacing:0.68px">Code:414v4q2ntq</div><div class="t" style="left:605.4px;top:244.9px;font-size:12.6px;letter-spacing:-0.5px">1,50 €</div><div class="a" style="left:49px;top:260.7px;width:635px;height:1.3px;background:#e2e4e8"></div><svg class="a" style="left:51px;top:266.0px" width="16" height="17" viewBox="0 0 16 17"><g fill="none" stroke="#b0b0b0" stroke-width="1.8"><path d="M2.6 1.5 Q-0.2 6.5 2.6 11.5"/><path d="M5.3 3.6 Q3.9 6.5 5.3 9.4"/><path d="M13.6 1.5 Q16.4 6.5 13.6 11.5"/><path d="M10.9 3.6 Q12.3 6.5 10.9 9.4"/></g><path d="M7 5 L9.4 5 L10.1 15.6 L6.3 15.6 Z" fill="#9a4a1e"/><circle cx="8.2" cy="5.3" r="1.6" fill="#c05a28"/></svg><div class="t" style="left:69.6px;top:268.9px;font-size:12.6px;letter-spacing:0px">12-E0-77-7D-76-CA</div><div class="t" style="left:252.7px;top:268.9px;font-size:12.6px;letter-spacing:-0.3px">21:09:41</div><div class="t" style="left:371.3px;top:268.9px;font-size:12.6px;letter-spacing:-0.3px">01:35:53</div><div class="t" style="left:468.5px;top:267.9px;font-size:13.2px;font-weight:700;letter-spacing:0.68px">Code:2gw1q4x871</div><div class="t" style="left:605.4px;top:268.9px;font-size:12.6px;letter-spacing:-0.5px">1,50 €</div><div class="a" style="left:49px;top:284.7px;width:635px;height:1.3px;background:#e2e4e8"></div>
</div></div><div class="a" style="left:0;top:0;width:1px;height:79.3px;background:#3a3a3a"></div><div class="a" style="left:0;top:0;width:98.5px;height:1px;background:#2a2a50"></div><div class="a" style="left:0;top:78.3px;width:98.5px;height:1px;background:#c8c8c8"></div></div><div class="t" style="left:908.7px;top:184.7px;font-size:11.75px;color:#a2a2a2">Here you will see the text that was selected when</div><div class="t" style="left:908.7px;top:199.4px;font-size:11.75px;color:#a2a2a2">snapshot was captured.</div><svg class="a" style="left:909px;top:222px" width="16" height="13"><use href="#ic"/></svg><div class="t" style="left:929.3px;top:222.5px;font-size:12px;color:#111;width:250px;overflow:hidden">Microformat - Wikipedia, the free encyclopedia</div><div class="a" style="left:909.2px;top:237.2px;width:102.7px;height:79.0px;background:#fff;overflow:hidden"><div class="a" style="left:0;top:0;width:100%;height:2.6px;background:linear-gradient(90deg,#d4d4d4 0,#dcd8d0 70%,#ece0b8 88%,#f0c888 95%,#e89878 100%)"></div><div class="a" style="left:0;top:2.6px;width:100%;height:2.4px;background:#eef0f2"></div><div class="a" style="left:2px;top:3.3px;width:30px;height:1px;background:#c8ccd0"></div><div class="a" style="left:0;top:0;width:1px;height:79.0px;background:#c4c4c4"></div><div class="a" style="left:100.7px;top:5px;width:2px;height:74.0px;background:#ececec"></div><div class="a" style="left:101.7px;top:0;width:1px;height:79.0px;background:#b8b8b8"></div><div class="a" style="left:0;top:77.8px;width:102.7px;height:1.2px;background:linear-gradient(90deg,#a8a8a0,#c0b4a0 50%,#b8b0b0)"></div><div class="a" style="left:1px;top:5px;width:14px;height:72.0px;background:#fcfcfc"></div><div class="a" style="left:100.5px;top:22px;width:2px;height:14px;background:#b8b8b8"></div><div class="a" style="left:20.0px;top:7.0px;width:39.7px;height:1px;background:#d0d6e5"></div><div class="a" style="left:20.0px;top:11.0px;width:43.7px;height:1px;background:#d6d8dd"></div><div class="a" style="left:20.0px;top:13.1px;width:62.7px;height:1px;background:#d6d8dd"></div><div class="a" style="left:20.0px;top:15.2px;width:40.8px;height:1px;background:#d6d8dd"></div><div class="a" style="left:20px;top:18px;width:77px;height:7px;background:#fafafa"></div><div class="a" style="left:22.0px;top:19.0px;width:18.4px;height:1px;background:#d0c6cb"></div><div class="a" style="left:22.0px;top:20.6px;width:16.4px;height:1px;background:#d0c6cb"></div><div class="a" style="left:22.0px;top:22.2px;width:12.7px;height:1px;background:#d0c6cb"></div><div class="a" style="left:22.0px;top:23.8px;width:18.1px;height:1px;background:#d0c6cb"></div><div class="a" style="left:20.0px;top:27.5px;width:39.9px;height:1px;background:#d8dbdd"></div><div class="a" style="left:20.0px;top:29.6px;width:55.2px;height:1px;background:#d8dbdd"></div><div class="a" style="left:20.0px;top:33.0px;width:5.3px;height:1px;background:#a2a2a2"></div><div class="a" style="left:20.0px;top:35.5px;width:16.4px;height:1px;background:#d6d8dd"></div><div class="a" style="left:20px;top:37.5px;width:77px;height:9px;background:#f6f6f6"></div><div class="a" style="left:22.0px;top:39.0px;width:27.1px;height:1px;background:#cbcbd0"></div><div class="a" style="left:22.0px;top:40.7px;width:34.7px;height:1px;background:#cbcbd0"></div><div class="a" style="left:22.0px;top:42.4px;width:21.4px;height:1px;background:#cbcbd0"></div><div class="a" style="left:22.0px;top:44.1px;width:23.2px;height:1px;background:#cbcbd0"></div><div class="a" style="left:20.0px;top:48.0px;width:19.5px;height:1px;background:#d0d8e5"></div><div class="a" style="left:20px;top:50px;width:77px;height:9px;background:#f6f6f6"></div><div class="a" style="left:22.0px;top:51.0px;width:42.8px;height:1px;background:#d0c6cb"></div><div class="a" style="left:22.0px;top:52.6px;width:34.7px;height:1px;background:#d0c6cb"></div><div class="a" style="left:22.0px;top:54.2px;width:30.7px;height:1px;background:#d0c6cb"></div><div class="a" style="left:22.0px;top:55.8px;width:43.5px;height:1px;background:#d0c6cb"></div><div class="a" style="left:22.0px;top:57.4px;width:23.0px;height:1px;background:#d0c6cb"></div><div class="a" style="left:20.0px;top:61.0px;width:71.6px;height:1px;background:#d6d8dd"></div><div class="a" style="left:20.0px;top:62.9px;width:49.6px;height:1px;background:#d6d8dd"></div><div class="a" style="left:20.0px;top:64.8px;width:44.1px;height:1px;background:#d6d8dd"></div><div class="a" style="left:20.0px;top:66.7px;width:43.0px;height:1px;background:#d6d8dd"></div><div class="a" style="left:20.0px;top:70.0px;width:7.9px;height:1px;background:#979797"></div><div class="a" style="left:20.0px;top:72.0px;width:54.5px;height:1px;background:#d0d8ea"></div><div class="a" style="left:20.0px;top:75.5px;width:9.4px;height:1px;background:#a2a2a2"></div></div><svg class="a" style="left:909px;top:326.3px" width="16" height="13"><use href="#ic"/></svg><div class="t" style="left:929.3px;top:326.6px;font-size:12px;color:#111;width:250px;overflow:hidden">Graph (mathematics) - Wikipedia, the free encyclopedia</div><div class="a" style="left:909.2px;top:341.6px;width:102.7px;height:79.0px;background:#fff;overflow:hidden"><div class="a" style="left:0;top:0;width:100%;height:2.6px;background:linear-gradient(90deg,#d4d4d4 0,#dcd8d0 70%,#ece0b8 88%,#f0c888 95%,#e89878 100%)"></div><div class="a" style="left:0;top:2.6px;width:100%;height:2.4px;background:#eef0f2"></div><div class="a" style="left:2px;top:3.3px;width:30px;height:1px;background:#c8ccd0"></div><div class="a" style="left:0;top:0;width:1px;height:79.0px;background:#c4c4c4"></div><div class="a" style="left:100.7px;top:5px;width:2px;height:74.0px;background:#ececec"></div><div class="a" style="left:101.7px;top:0;width:1px;height:79.0px;background:#b8b8b8"></div><div class="a" style="left:0;top:77.8px;width:102.7px;height:1.2px;background:linear-gradient(90deg,#a8a8a0,#c0b4a0 50%,#b8b0b0)"></div><div class="a" style="left:1px;top:5px;width:14px;height:72.0px;background:#fcfcfc"></div><div class="a" style="left:100.5px;top:46px;width:2px;height:12px;background:#b8b8b8"></div><div class="a" style="left:20.0px;top:7.0px;width:60.9px;height:1px;background:#d6d8dd"></div><div class="a" style="left:20.0px;top:9.1px;width:63.1px;height:1px;background:#d6d8dd"></div><div class="a" style="left:20.0px;top:12.5px;width:5.5px;height:1px;background:#a2a2a2"></div><div class="a" style="left:20.0px;top:14.5px;width:44.9px;height:1px;background:#d6d8dd"></div><div class="a" style="left:20.0px;top:16.4px;width:30.8px;height:1px;background:#d6d8dd"></div><div class="a" style="left:20.0px;top:18.4px;width:30.7px;height:1px;background:#d6d8dd"></div><div class="a" style="left:20.0px;top:20.4px;width:35.0px;height:1px;background:#d6d8dd"></div><div class="a" style="left:20.0px;top:22.3px;width:48.7px;height:1px;background:#d6d8dd"></div><div class="a" style="left:20.0px;top:24.2px;width:41.4px;height:1px;background:#d6d8dd"></div><div class="a" style="left:20.0px;top:26.2px;width:38.1px;height:1px;background:#d6d8dd"></div><div class="a" style="left:20.0px;top:28.1px;width:46.0px;height:1px;background:#d6d8dd"></div><div class="a" style="left:20.0px;top:30.1px;width:42.1px;height:1px;background:#d6d8dd"></div><svg class="a" style="left:80px;top:12px" width="22" height="14" viewBox="0 0 22 14"><g fill="#fff" stroke="#8a8a8a" stroke-width="0.5"><path d="M2 2 L7 5 L11 3 L15 6 L12 10 L8 8 L7 5 M11 3 L12 10" fill="none"/><circle cx="2" cy="2" r="1.3"/><circle cx="7" cy="5" r="1.3"/><circle cx="11" cy="3" r="1.3"/><circle cx="15" cy="6" r="1.3"/><circle cx="12" cy="10" r="1.3"/><circle cx="8" cy="9" r="1.3"/></g></svg><div class="a" style="left:20.0px;top:34.0px;width:13.0px;height:1px;background:#a2a2a2"></div><div class="a" style="left:20.0px;top:36.5px;width:69.1px;height:1px;background:#d6d8dd"></div><div class="a" style="left:20.0px;top:38.6px;width:65.4px;height:1px;background:#d6d8dd"></div><div class="a" style="left:20.0px;top:40.7px;width:47.9px;height:1px;background:#d6d8dd"></div><div class="a" style="left:20.0px;top:42.8px;width:60.6px;height:1px;background:#d6d8dd"></div><div class="a" style="left:20.0px;top:44.9px;width:58.7px;height:1px;background:#d6d8dd"></div><div class="a" style="left:20.0px;top:47.0px;width:72.2px;height:1px;background:#d6d8dd"></div><div class="a" style="left:20.0px;top:49.1px;width:66.6px;height:1px;background:#d6d8dd"></div><div class="a" style="left:20.0px;top:51.2px;width:49.6px;height:1px;background:#d6d8dd"></div><div class="a" style="left:20.0px;top:53.3px;width:76.2px;height:1px;background:#d6d8dd"></div><div class="a" style="left:20.0px;top:55.4px;width:43.0px;height:1px;background:#d6d8dd"></div><div class="a" style="left:20.0px;top:57.5px;width:54.6px;height:1px;background:#d6d8dd"></div><div class="a" style="left:20.0px;top:59.6px;width:67.6px;height:1px;background:#d6d8dd"></div><div class="a" style="left:20.0px;top:61.7px;width:44.4px;height:1px;background:#d6d8dd"></div><div class="a" style="left:20.0px;top:63.8px;width:57.3px;height:1px;background:#d6d8dd"></div><div class="a" style="left:20.0px;top:65.9px;width:40.0px;height:1px;background:#d6d8dd"></div><div class="a" style="left:20.0px;top:68.0px;width:64.2px;height:1px;background:#d6d8dd"></div><div class="a" style="left:20.0px;top:70.1px;width:67.9px;height:1px;background:#d6d8dd"></div></div><svg class="a" style="left:909px;top:430.3px" width="16" height="13"><use href="#ic"/></svg><div class="t" style="left:929.3px;top:430.7px;font-size:12px;color:#111;width:250px;overflow:hidden">Under Frozen Tundra, an Icebreaking Ship Uncovers the Makers</div><div class="a" style="left:909.2px;top:445.6px;width:102.7px;height:79.0px;background:#fff;overflow:hidden"><div class="a" style="left:0;top:0;width:100%;height:2.6px;background:linear-gradient(90deg,#d4d4d4 0,#dcd8d0 70%,#ece0b8 88%,#f0c888 95%,#e89878 100%)"></div><div class="a" style="left:0;top:2.6px;width:100%;height:2.4px;background:#eef0f2"></div><div class="a" style="left:2px;top:3.3px;width:30px;height:1px;background:#c8ccd0"></div><div class="a" style="left:0;top:0;width:1px;height:79.0px;background:#c4c4c4"></div><div class="a" style="left:100.7px;top:5px;width:2px;height:74.0px;background:#ececec"></div><div class="a" style="left:101.7px;top:0;width:1px;height:79.0px;background:#b8b8b8"></div><div class="a" style="left:0;top:77.8px;width:102.7px;height:1.2px;background:linear-gradient(90deg,#a8a8a0,#c0b4a0 50%,#b8b0b0)"></div><div class="a" style="left:1px;top:5px;width:14px;height:72.0px;background:#fcfcfc"></div><div class="a" style="left:1px;top:5px;width:14px;height:72.0px;background:#fff"></div><div class="a" style="left:100.5px;top:7px;width:2px;height:10px;background:#c0c0c0"></div><div class="a" style="left:3.0px;top:9.5px;width:11.0px;height:1px;background:#c1c1c1"></div><div class="a" style="left:43px;top:8.8px;width:20px;height:1.6px;background:#555"></div><div class="a" style="left:86px;top:8.5px;width:9px;height:2.5px;background:#8aa4c8"></div><div class="a" style="left:25px;top:11.8px;width:55px;height:0.8px;background:linear-gradient(90deg,#e8b0b0,#e8e0a0,#b0d8e8)"></div><div class="a" style="left:12.5px;top:14.5px;width:5.6px;height:1px;background:#cbcbcb"></div><div class="a" style="left:12.5px;top:17.3px;width:72px;height:1.6px;background:#6a6a6a"></div><div class="a" style="left:12.5px;top:21.0px;width:11.8px;height:1px;background:#e0bcb6"></div><div class="a" style="left:12.5px;top:23.3px;width:83.5px;height:47px;background:linear-gradient(180deg,#2856a8 0,#3a68b8 35%,#6a84c4 62%,#8090c8 100%)"></div><div class="a" style="left:12.5px;top:50px;width:83.5px;height:5px;background:linear-gradient(90deg,#5a6088,#7078a0 40%,#383c58 80%,#2a2e48)"></div><div class="a" style="left:12.5px;top:55px;width:83.5px;height:15.3px;background:linear-gradient(180deg,#9aa4d0,#8490c4)"></div><svg class="a" style="left:12.5px;top:23.3px" width="84" height="47" viewBox="0 0 84 47"><g stroke="#3a4050" stroke-width="0.8" fill="none"><path d="M34 1 L34 22 M36 3 L36 22 M31 8 L39 8 M30 14 L40 14 M27 18 L44 20"/></g><path d="M25 21 L50 21 L52 28 L24 28 Z" fill="#d8dce6"/><path d="M24 28 L55 28 L58 38 L24 40 Z" fill="#e4e6ee"/><path d="M26 24 L48 24 L48 26 L26 26 Z" fill="#4a5060"/><path d="M22 38 L60 37 L62 47 L22 47 Z" fill="#22242e"/><path d="M56 36 L64 35 L68 47 L58 47 Z" fill="#3a4458"/><rect x="0" y="40" width="21" height="7" fill="#141414"/><path d="M2.5 41.5 L5.5 43.5 L2.5 45.5 Z" fill="#fff"/><rect x="7" y="42" width="10" height="0.8" fill="#c0c0c0"/><rect x="7" y="44" width="12" height="0.8" fill="#a0a0a0"/></svg><div class="a" style="left:12.5px;top:72.0px;width:42.4px;height:1px;background:#dbdbdb"></div><div class="a" style="left:12.5px;top:73.8px;width:39.9px;height:1px;background:#dbdbdb"></div></div><svg class="a" style="left:909px;top:534.2px" width="16" height="13"><use href="#ic"/></svg><div class="t" style="left:929.3px;top:534.6px;font-size:12px;color:#111;width:250px;overflow:hidden">Semantic Web - Wikipedia, the free encyclopedia</div><div class="a" style="left:909.2px;top:549.3px;width:102.7px;height:79.0px;background:#fff;overflow:hidden"><div class="a" style="left:0;top:0;width:100%;height:2.6px;background:linear-gradient(90deg,#d4d4d4 0,#dcd8d0 70%,#ece0b8 88%,#f0c888 95%,#e89878 100%)"></div><div class="a" style="left:0;top:2.6px;width:100%;height:2.4px;background:#eef0f2"></div><div class="a" style="left:2px;top:3.3px;width:30px;height:1px;background:#c8ccd0"></div><div class="a" style="left:0;top:0;width:1px;height:79.0px;background:#c4c4c4"></div><div class="a" style="left:100.7px;top:5px;width:2px;height:74.0px;background:#ececec"></div><div class="a" style="left:101.7px;top:0;width:1px;height:79.0px;background:#b8b8b8"></div><div class="a" style="left:0;top:77.8px;width:102.7px;height:1.2px;background:linear-gradient(90deg,#a8a8a0,#c0b4a0 50%,#b8b0b0)"></div><div class="a" style="left:1px;top:5px;width:14px;height:72.0px;background:#fcfcfc"></div><div class="a" style="left:100.5px;top:26px;width:2px;height:8px;background:#b8b8b8"></div><div class="a" style="left:20.0px;top:6.5px;width:51.3px;height:1px;background:#d6d8dd"></div><div class="a" style="left:20.0px;top:9.0px;width:5.8px;height:1px;background:#a2a2a2"></div><div class="a" style="left:20.0px;top:11.0px;width:41.4px;height:1px;background:#d6d8dd"></div><div class="a" style="left:25.0px;top:13.5px;width:70.0px;height:1px;background:#d6d8dd"></div><div class="a" style="left:25.0px;top:15.5px;width:53.1px;height:1px;background:#d6d8dd"></div><div class="a" style="left:25.0px;top:17.5px;width:59.9px;height:1px;background:#d6d8dd"></div><div class="a" style="left:20.0px;top:20.0px;width:26.5px;height:1px;background:#d6d8dd"></div><div class="a" style="left:20.0px;top:23.5px;width:8.5px;height:1px;background:#a2a2a2"></div><div class="a" style="left:20.0px;top:25.5px;width:63.4px;height:1px;background:#d6d8dd"></div><div class="a" style="left:20.0px;top:27.4px;width:76.7px;height:1px;background:#d6d8dd"></div><div class="a" style="left:20px;top:29.5px;width:77px;height:3.8px;background:#3a80e0"></div><div class="a" style="left:20px;top:33.3px;width:4px;height:1.5px;background:#3a80e0"></div><div class="a" style="left:20.0px;top:35.5px;width:70.1px;height:1px;background:#d6d8dd"></div><div class="a" style="left:20.0px;top:37.6px;width:49.5px;height:1px;background:#d6d8dd"></div><div class="a" style="left:20.0px;top:39.7px;width:53.4px;height:1px;background:#d6d8dd"></div><div class="a" style="left:20.0px;top:41.8px;width:64.2px;height:1px;background:#d6d8dd"></div><div class="a" style="left:20.0px;top:43.9px;width:39.4px;height:1px;background:#d6d8dd"></div><div class="a" style="left:20.0px;top:46.0px;width:56.3px;height:1px;background:#d6d8dd"></div><div class="a" style="left:20.0px;top:48.1px;width:45.0px;height:1px;background:#d6d8dd"></div><div class="a" style="left:20.0px;top:50.2px;width:43.0px;height:1px;background:#d6d8dd"></div><div class="a" style="left:20.0px;top:52.3px;width:40.8px;height:1px;background:#d6d8dd"></div><div class="a" style="left:20.0px;top:54.4px;width:68.1px;height:1px;background:#d6d8dd"></div><div class="a" style="left:20.0px;top:56.5px;width:43.5px;height:1px;background:#d6d8dd"></div><div class="a" style="left:20.0px;top:58.6px;width:48.0px;height:1px;background:#d6d8dd"></div><div class="a" style="left:20.0px;top:60.7px;width:53.6px;height:1px;background:#d6d8dd"></div><div class="a" style="left:20.0px;top:62.8px;width:72.0px;height:1px;background:#d6d8dd"></div><div class="a" style="left:20.0px;top:64.9px;width:41.6px;height:1px;background:#d6d8dd"></div><div class="a" style="left:20.0px;top:67.0px;width:55.8px;height:1px;background:#d6d8dd"></div><div class="a" style="left:20.0px;top:69.1px;width:59.7px;height:1px;background:#d6d8dd"></div><div class="a" style="left:20.0px;top:71.5px;width:9.4px;height:1px;background:#a2a2a2"></div><div class="a" style="left:20.0px;top:75.0px;width:70.0px;height:1px;background:#d6d8dd"></div><div class="a" style="left:20.0px;top:77.0px;width:71.8px;height:1px;background:#d6d8dd"></div></div><div class="a" style="left:905px;top:629px;width:275px;height:99.8px;overflow:hidden"><div class="t" style="left:4.7px;top:1.65px;font-size:11.8px;color:#a2a2a2">Vastness: The World Wide Web contains many</div><div class="t" style="left:4.7px;top:16.57px;font-size:11.8px;color:#a2a2a2">billions of pages. The SNOMED CT medical</div><div class="t" style="left:4.7px;top:31.49px;font-size:11.8px;color:#a2a2a2">terminology ontology alone contains 370,000 class</div><div class="t" style="left:4.7px;top:46.41px;font-size:11.8px;color:#a2a2a2">names, and existing technology has not yet been</div><div class="t" style="left:4.7px;top:61.33px;font-size:11.8px;color:#a2a2a2">able to eliminate all semantically duplicated terms.</div><div class="t" style="left:4.7px;top:76.25px;font-size:11.8px;color:#a2a2a2">Any automated reasoning system will have to deal</div><div class="t" style="left:4.7px;top:91.17px;font-size:11.8px;color:#a2a2a2">with truly huge inputs.</div></div><svg class="a" style="left:909px;top:738.1px" width="16" height="13"><use href="#ic"/></svg><div class="t" style="left:929.3px;top:738.6px;font-size:12px;color:#111;width:250px;overflow:hidden">Concept map - Wikipedia, the free encyclopedia</div><div class="a" style="left:909.2px;top:753.5px;width:102.7px;height:79.0px;background:#fff;overflow:hidden"><div class="a" style="left:0;top:0;width:100%;height:2.6px;background:linear-gradient(90deg,#d4d4d4 0,#dcd8d0 70%,#ece0b8 88%,#f0c888 95%,#e89878 100%)"></div><div class="a" style="left:0;top:2.6px;width:100%;height:2.4px;background:#eef0f2"></div><div class="a" style="left:2px;top:3.3px;width:30px;height:1px;background:#c8ccd0"></div><div class="a" style="left:0;top:0;width:1px;height:79.0px;background:#c4c4c4"></div><div class="a" style="left:100.7px;top:5px;width:2px;height:74.0px;background:#ececec"></div><div class="a" style="left:101.7px;top:0;width:1px;height:79.0px;background:#b8b8b8"></div><div class="a" style="left:0;top:77.8px;width:102.7px;height:1.2px;background:linear-gradient(90deg,#a8a8a0,#c0b4a0 50%,#b8b0b0)"></div><div class="a" style="left:1px;top:5px;width:14px;height:72.0px;background:#fcfcfc"></div><div class="a" style="left:20.0px;top:6.5px;width:49.2px;height:1px;background:#d6d8dd"></div><div class="a" style="left:20.0px;top:8.5px;width:54.5px;height:1px;background:#d6d8dd"></div><div class="a" style="left:20.0px;top:10.5px;width:52.3px;height:1px;background:#d6d8dd"></div><div class="a" style="left:20.0px;top:13.5px;width:7.5px;height:1px;background:#a2a2a2"></div><div class="a" style="left:20.0px;top:16.0px;width:44.0px;height:1px;background:#d6d8dd"></div><div class="a" style="left:20.0px;top:18.1px;width:25.9px;height:1px;background:#d6d8dd"></div><div class="a" style="left:20.0px;top:20.1px;width:26.5px;height:1px;background:#d6d8dd"></div><div class="a" style="left:20.0px;top:22.1px;width:27.7px;height:1px;background:#d6d8dd"></div><div class="a" style="left:20.0px;top:24.2px;width:27.8px;height:1px;background:#d6d8dd"></div><div class="a" style="left:20.0px;top:26.2px;width:33.4px;height:1px;background:#d6d8dd"></div><div class="a" style="left:20.0px;top:28.3px;width:35.8px;height:1px;background:#d6d8dd"></div><div class="a" style="left:20.0px;top:30.3px;width:28.4px;height:1px;background:#d6d8dd"></div><div class="a" style="left:20.0px;top:32.4px;width:22.6px;height:1px;background:#d6d8dd"></div><div class="a" style="left:20.0px;top:34.5px;width:31.9px;height:1px;background:#d6d8dd"></div><div class="a" style="left:20.0px;top:36.5px;width:30.8px;height:1px;background:#d6d8dd"></div><div class="a" style="left:20.0px;top:38.5px;width:35.2px;height:1px;background:#d6d8dd"></div><div class="a" style="left:20.0px;top:40.6px;width:43.9px;height:1px;background:#d6d8dd"></div><div class="a" style="left:20.0px;top:42.6px;width:38.0px;height:1px;background:#d6d8dd"></div><div class="a" style="left:20.0px;top:44.7px;width:34.1px;height:1px;background:#d6d8dd"></div><div class="a" style="left:20.0px;top:46.8px;width:36.4px;height:1px;background:#d6d8dd"></div><div class="a" style="left:20.0px;top:48.8px;width:37.7px;height:1px;background:#d6d8dd"></div><div class="a" style="left:20.0px;top:50.8px;width:23.7px;height:1px;background:#d6d8dd"></div><div class="a" style="left:20.0px;top:52.9px;width:42.7px;height:1px;background:#d6d8dd"></div><div class="a" style="left:20.0px;top:54.9px;width:40.0px;height:1px;background:#d6d8dd"></div><div class="a" style="left:20.0px;top:57.0px;width:42.2px;height:1px;background:#d6d8dd"></div><div class="a" style="left:20.0px;top:59.0px;width:40.5px;height:1px;background:#d6d8dd"></div><div class="a" style="left:20.0px;top:61.1px;width:31.3px;height:1px;background:#d6d8dd"></div><div class="a" style="left:20.0px;top:63.1px;width:31.5px;height:1px;background:#d6d8dd"></div><div class="a" style="left:20.0px;top:65.2px;width:24.8px;height:1px;background:#d6d8dd"></div><div class="a" style="left:20.0px;top:67.2px;width:36.8px;height:1px;background:#d6d8dd"></div><div class="a" style="left:20.0px;top:69.3px;width:23.9px;height:1px;background:#d6d8dd"></div><div class="a" style="left:20.0px;top:71.3px;width:24.0px;height:1px;background:#d6d8dd"></div><div class="a" style="left:20.0px;top:73.4px;width:27.2px;height:1px;background:#d6d8dd"></div><div class="a" style="left:20.0px;top:75.4px;width:26.2px;height:1px;background:#d6d8dd"></div><div class="a" style="left:66px;top:16px;width:33px;height:23px;border:0.5px solid #e0e0e0;background:#fff"></div><svg class="a" style="left:66px;top:16px" width="33" height="23" viewBox="0 0 33 23"><g stroke="#90b0a0" stroke-width="0.6" fill="none"><path d="M5 15 L10 11 L15 7 L20 7 L26 9 M10 11 L13 12 L19 12 L24 15 L28 17 M20 7 L21 2 M26 9 L29 6"/></g><g fill="#a0c0b8"><rect x="19" y="1" width="3" height="1.5"/><rect x="28" y="6" width="3" height="1.5"/><rect x="28" y="8" width="3" height="1.5"/><rect x="28" y="10" width="3" height="1.5"/><rect x="17" y="11" width="3" height="1.5"/><rect x="8" y="10" width="3" height="1.5"/><rect x="3" y="15" width="3" height="1.5"/><rect x="22" y="20" width="3" height="1.5"/></g></svg></div></div>
</body></html>
